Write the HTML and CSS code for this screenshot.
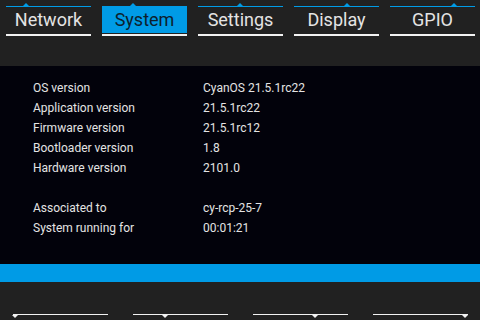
FILE: index.html
```html
<!DOCTYPE html>
<html lang="en">
<head>
    <meta charset="UTF-8">
    <meta name="viewport" content="width=device-width, initial-scale=1.0">
    <title>System</title>
    <link rel="stylesheet" href="styles.css">
</head>
<body>
    <div class="screen">
        <div class="tabs">
            <div class="tab"><span class="pip" style="left: 17px"></span><span class="tab-label">Network</span></div>
            <div class="tab active"><span class="pip" style="left: 28px"></span><span class="tab-label">System</span></div>
            <div class="tab"><span class="pip" style="left: 39px"></span><span class="tab-label">Settings</span></div>
            <div class="tab"><span class="pip" style="left: 50px"></span><span class="tab-label">Display</span></div>
            <div class="tab"><span class="pip" style="left: 61px"></span><span class="tab-label">GPIO</span></div>
        </div>
        <div class="content">
            <table class="info">
                <tr><td>OS version</td><td>CyanOS 21.5.1rc22</td></tr>
                <tr><td>Application version</td><td>21.5.1rc22</td></tr>
                <tr><td>Firmware version</td><td>21.5.1rc12</td></tr>
                <tr><td>Bootloader version</td><td>1.8</td></tr>
                <tr><td>Hardware version</td><td>2101.0</td></tr>
                <tr><td>&nbsp;</td><td></td></tr>
                <tr><td>Associated to</td><td>cy-rcp-25-7</td></tr>
                <tr><td>System running for</td><td>00:01:21</td></tr>
            </table>
        </div>
        <div class="status-bar"></div>
        <div class="softkeys">
            <div class="key"><span class="key-pip" style="left: -1px"></span></div>
            <div class="key"><span class="key-pip" style="left: 29px"></span></div>
            <div class="key"><span class="key-pip" style="left: 59px"></span></div>
            <div class="key"><span class="key-pip" style="left: 89px"></span></div>
        </div>
    </div>
</body>
</html>
```

FILE: styles.css
```css
:root {
    --top-bg: #212121;
    --content-bg: #02020b;
    --accent: #009be6;
    --text-color: #e4e4e4;
}

body {
    margin: 0;
    padding: 0;
    background-color: var(--top-bg);
    font-family: Roboto, 'Liberation Sans', sans-serif;
    color: var(--text-color);
}

.screen {
    width: 480px;
    height: 320px;
    display: flex;
    flex-direction: column;
    overflow: hidden;
}

.tabs {
    height: 66px;
    box-sizing: border-box;
    padding: 6px 0 0 6px;
    display: flex;
    gap: 11px;
    background-color: var(--top-bg);
}

.tab {
    position: relative;
    width: 85px;
    height: 30px;
    box-sizing: border-box;
    border-top: 1px solid var(--accent);
    border-bottom: 2px solid #f2f2f2;
    padding-bottom: 1px;
}

.tab-label {
    display: block;
    height: 26px;
    line-height: 26px;
    text-align: center;
    font-size: 18px;
}

.tab.active .tab-label {
    background-color: var(--accent);
    color: #0d1f2d;
}

.pip {
    position: absolute;
    top: -4px;
    width: 0;
    height: 0;
    border-left: 3px solid transparent;
    border-right: 3px solid transparent;
    border-bottom: 3px solid var(--accent);
}

.content {
    height: 198px;
    box-sizing: border-box;
    padding: 12px 0 0 33px;
    background-color: var(--content-bg);
}

.info {
    border-collapse: collapse;
    font-size: 12px;
}

.info td {
    padding: 0;
    height: 20px;
    line-height: 20px;
    white-space: nowrap;
}

.info td:first-child {
    width: 170px;
}

.status-bar {
    height: 18px;
    background-color: var(--accent);
}

.softkeys {
    flex: 1;
    display: flex;
    align-items: flex-end;
    gap: 25px;
    padding: 0 0 5px 13px;
    background-color: var(--top-bg);
}

.key {
    position: relative;
    width: 95px;
    height: 1px;
    background-color: #f2f2f2;
}

.key-pip {
    position: absolute;
    top: 1px;
    width: 0;
    height: 0;
    border-left: 3px solid transparent;
    border-right: 3px solid transparent;
    border-top: 3px solid #f2f2f2;
}
```
